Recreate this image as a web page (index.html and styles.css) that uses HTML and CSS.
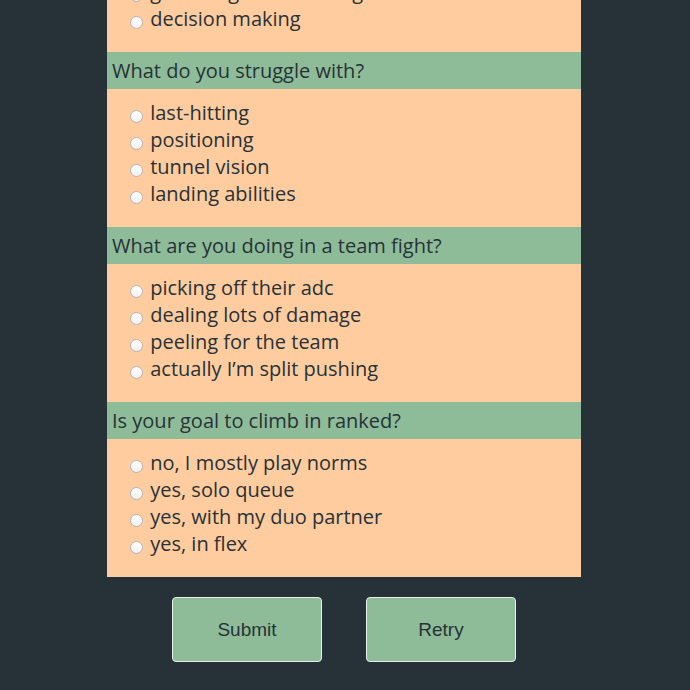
FILE: index.html
```html
<!DOCTYPE html>
<html lang="en">
<head>
<meta charset="utf-8">
<title>Quiz</title>
<link rel="stylesheet" href="styles.css">
</head>
<body>
<main class="page">
  <form class="quiz">
    <section class="question question--partial">
      <ul class="options">
        <li><label><input type="radio" name="q1"> gathering and roaming</label></li>
        <li><label><input type="radio" name="q1"> decision making</label></li>
      </ul>
    </section>
    <section class="question">
      <h2 class="question-title">What do you struggle with?</h2>
      <ul class="options">
        <li><label><input type="radio" name="q2"> last-hitting</label></li>
        <li><label><input type="radio" name="q2"> positioning</label></li>
        <li><label><input type="radio" name="q2"> tunnel vision</label></li>
        <li><label><input type="radio" name="q2"> landing abilities</label></li>
      </ul>
    </section>
    <section class="question">
      <h2 class="question-title">What are you doing in a team fight?</h2>
      <ul class="options">
        <li><label><input type="radio" name="q3"> picking off their adc</label></li>
        <li><label><input type="radio" name="q3"> dealing lots of damage</label></li>
        <li><label><input type="radio" name="q3"> peeling for the team</label></li>
        <li><label><input type="radio" name="q3"> actually I’m split pushing</label></li>
      </ul>
    </section>
    <section class="question">
      <h2 class="question-title">Is your goal to climb in ranked?</h2>
      <ul class="options">
        <li><label><input type="radio" name="q4"> no, I mostly play norms</label></li>
        <li><label><input type="radio" name="q4"> yes, solo queue</label></li>
        <li><label><input type="radio" name="q4"> yes, with my duo partner</label></li>
        <li><label><input type="radio" name="q4"> yes, in flex</label></li>
      </ul>
    </section>
  </form>
  <div class="actions">
    <button type="button" class="btn">Submit</button>
    <button type="button" class="btn">Retry</button>
  </div>
</main>
</body>
</html>
```

FILE: styles.css
```css
html, body {
  margin: 0;
  padding: 0;
}

body {
  background: #263238;
  color: #263238;
  font-family: "Open Sans", "Noto Sans", sans-serif;
  overflow: hidden;
}

.page {
  display: flex;
  flex-direction: column;
  align-items: center;
  padding-right: 2px;
}

.quiz {
  width: 474px;
  background: #ffcc9f;
  margin-top: -32px;
}

.question-title {
  margin: 0;
  height: 37px;
  line-height: 37px;
  padding: 0 5px;
  background: #8fbc98;
  font-size: 20px;
  font-weight: 400;
  color: #263238;
  white-space: nowrap;
}

.options {
  list-style: none;
  margin: 0;
  padding: 10px 0 20px 18px;
  font-size: 20px;
  line-height: 27px;
}

.options li {
  white-space: nowrap;
}

.options input[type="radio"] {
  -webkit-appearance: none;
  appearance: none;
  width: 13px;
  height: 13px;
  margin: 3px 2px 0 5px;
  border: 1px solid #b5b5b5;
  border-radius: 50%;
  background: linear-gradient(#ffffff, #f1f1f1);
  box-sizing: border-box;
  vertical-align: -3px;
}

.actions {
  display: flex;
  gap: 44px;
  margin-top: 20px;
}

.btn {
  width: 150px;
  height: 65px;
  background: #8fbc98;
  border: 1px solid #e8eee9;
  border-radius: 4px;
  font-family: "Liberation Sans", Arial, sans-serif;
  font-size: 19px;
  color: #263238;
  padding: 0;
}
```
